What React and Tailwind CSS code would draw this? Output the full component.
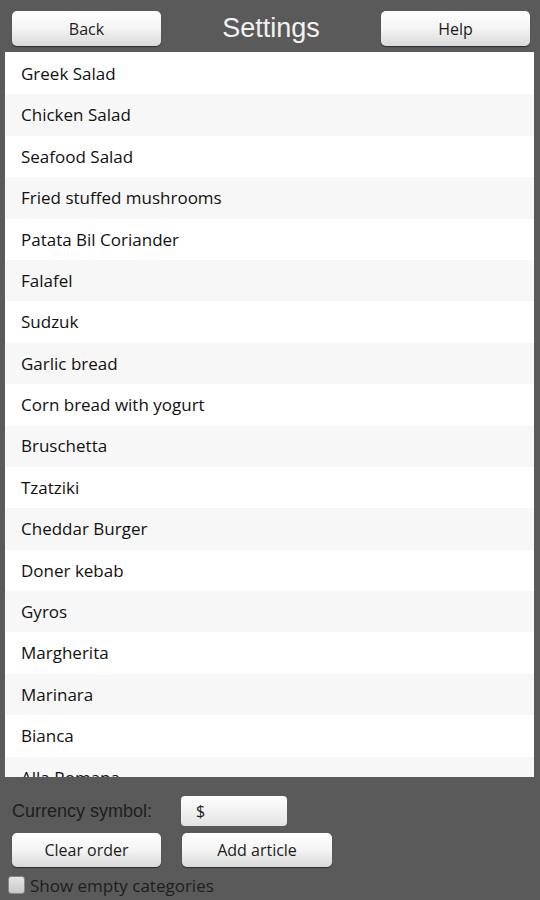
const items = [
  "Greek Salad",
  "Chicken Salad",
  "Seafood Salad",
  "Fried stuffed mushrooms",
  "Patata Bil Coriander",
  "Falafel",
  "Sudzuk",
  "Garlic bread",
  "Corn bread with yogurt",
  "Bruschetta",
  "Tzatziki",
  "Cheddar Burger",
  "Doner kebab",
  "Gyros",
  "Margherita",
  "Marinara",
  "Bianca",
  "Alla Romana",
];

const btn =
  "flex items-center justify-center rounded-[5px] bg-gradient-to-b from-white via-[#f4f4f4] to-[#d9d9d9] shadow-[0_1px_1px_rgba(0,0,0,0.5)] text-[16px] text-[#1c1c1c] font-['Open_Sans',sans-serif]";

export default function App() {
  return (
    <div className="w-[540px] h-[900px] bg-[#5a5a5a] flex flex-col overflow-hidden">
      {/* Header */}
      <div className="flex items-center justify-between pl-[12px] pr-[10px] pt-[11px]">
        <button className={`${btn} w-[149px] h-[35px]`}>Back</button>
        <h1 className="text-[27px] text-[#f2f2f2] font-['Liberation_Sans',Arial,sans-serif] leading-none pb-[1px]">
          Settings
        </h1>
        <button className={`${btn} w-[149px] h-[35px]`}>Help</button>
      </div>

      {/* List */}
      <div className="ml-[5px] mr-[6px] mt-[6px] h-[725px] pt-[1px] bg-white overflow-hidden">
        {items.map((name, i) => (
          <div
            key={name}
            className={`h-[41.4px] flex items-center pl-[16px] text-[17px] text-[#111] font-['Open_Sans',sans-serif] ${
              i % 2 === 1 ? "bg-[#f7f7f7]" : "bg-white"
            }`}
          >
            {name}
          </div>
        ))}
      </div>

      {/* Bottom controls */}
      <div className="flex items-center mt-[19px] h-[30px] pl-[12px]">
        <span className="w-[169px] text-[18px] text-[#1e1e1e] font-['Liberation_Sans',Arial,sans-serif]">
          Currency symbol:
        </span>
        <div className="w-[106px] h-[30px] rounded-[4px] bg-gradient-to-b from-white to-[#e4e4e4] flex items-center pl-[15px] text-[16px] text-[#1c1c1c] font-['Open_Sans',sans-serif]">
          $
        </div>
      </div>
      <div className="flex gap-[21px] mt-[7px] pl-[12px]">
        <button className={`${btn} w-[149px] h-[34px]`}>Clear order</button>
        <button className={`${btn} w-[150px] h-[34px]`}>Add article</button>
      </div>
      <div className="flex items-center mt-[9px] pl-[8px] gap-[5px]">
        <div className="w-[17px] h-[18px] rounded-[3px] bg-gradient-to-b from-[#e6e6e6] to-[#c8c8c8] border border-[#888]" />
        <span className="text-[17px] text-[#1e1e1e] font-['Open_Sans',sans-serif] leading-none">
          Show empty categories
        </span>
      </div>
    </div>
  );
}
